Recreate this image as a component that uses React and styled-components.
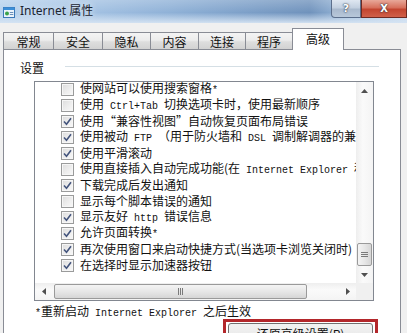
import React from 'react';
import styled, { createGlobalStyle } from 'styled-components';

const GlobalStyle = createGlobalStyle`
  html, body { margin: 0; padding: 0; background: #f0f0f0; }
  body { font-family: "Noto Sans CJK SC", "Noto Sans", sans-serif; }
`;

const Window = styled.div`
  width: 407px;
  height: 333px;
  overflow: hidden;
  display: flex;
  flex-direction: column;
  background: #f0f0f0;
`;

const TitleBar = styled.div`
  height: 23px;
  flex: none;
  display: flex;
  align-items: flex-start;
  background:
    linear-gradient(180deg, rgba(255,255,255,0.22) 0%, rgba(255,255,255,0) 55%, rgba(214,228,243,0.95) 100%),
    linear-gradient(90deg, #b6d2ed 0%, #a7c5e5 18%, #8fb1d7 42%, #7b9ec7 62%, #6f92bc 76%, #9fbddd 86%, #c6d9ed 100%);
`;

const AppIcon = styled.svg`
  flex: none;
  margin: 6px 5px 0 3px;
`;

const TitleText = styled.div`
  font-family: "Noto Sans", "Noto Sans CJK SC", sans-serif;
  font-size: 12px;
  line-height: 21px;
  color: #1b2430;
  text-shadow: 0 0 6px rgba(255,255,255,0.9);
`;

const Caption = styled.div`
  margin-left: auto;
  display: flex;
  height: 18px;
`;

const CapButton = styled.div`
  height: 17px;
  width: ${p => p.$w}px;
  display: flex;
  align-items: center;
  justify-content: center;
  color: #fff;
  font-family: "DejaVu Sans", sans-serif;
  font-weight: bold;
  font-size: ${p => p.$size}px;
  text-shadow: 0 0 2px #2a3340, 0 0 1px #2a3340;
  border: 1px solid ${p => p.$border};
  border-top: none;
  background: ${p => p.$bg};
  border-radius: ${p => p.$radius};
`;

const Body = styled.div`
  flex: 1;
  display: flex;
  flex-direction: column;
  padding: 5px 6px 0 3px;
`;

const Tabs = styled.div`
  height: 21px;
  display: flex;
  align-items: flex-end;
`;

const Tab = styled.div`
  box-sizing: border-box;
  width: ${p => p.$w}px;
  height: ${p => (p.$active ? 22 : 17)}px;
  margin-right: -1px;
  margin-bottom: ${p => (p.$active ? -1 : 0)}px;
  padding-bottom: ${p => (p.$active ? 3 : 0)}px;
  position: relative;
  z-index: ${p => (p.$active ? 2 : 1)};
  border: 1px solid #898c95;
  border-bottom: none;
  display: flex;
  align-items: center;
  justify-content: center;
  font-size: 12px;
  color: #111;
  background: ${p => (p.$active ? '#fff' : 'linear-gradient(180deg, #f4f4f4 0%, #ececec 45%, #dedede 55%, #d2d2d2 100%)')};
`;

const Panel = styled.div`
  height: 320px;
  flex: none;
  border: 1px solid #898c95;
  background: #fff;
  display: flex;
  flex-direction: column;
`;

const GroupHead = styled.div`
  display: flex;
  align-items: center;
  height: 14px;
  margin-top: 10px;
  padding: 0 21px 0 16px;
  font-size: 12px;
  color: #111;
`;

const Rule = styled.div`
  flex: 1;
  margin-left: 21px;
  border-top: 1px solid #d5dfe5;
  border-bottom: 1px solid #fff;
`;

const ListBox = styled.div`
  width: 340px;
  height: 220px;
  box-sizing: border-box;
  margin: 7px 0 0 30px;
  border: 1px solid #828790;
  display: flex;
  flex-direction: column;
`;

const ListArea = styled.div`
  flex: 1;
  display: flex;
  min-height: 0;
`;

const Rows = styled.div`
  flex: 1;
  overflow: hidden;
`;

const Row = styled.div`
  height: 16px;
  padding: 0 0 2px 26px;
  box-sizing: border-box;
  display: flex;
  align-items: center;
  white-space: nowrap;
  font-size: 12px;
  line-height: 14px;
  color: #111;
`;

const Label = styled.span`
  margin-left: 6px;
`;

const Lat = styled.span`
  font-family: "Liberation Mono", monospace;
  font-size: 10px;
  white-space: pre;
`;

const Box = styled.span`
  flex: none;
  width: 11px;
  height: 11px;
  border: 1px solid #9a9b9b;
  background: linear-gradient(135deg, #dcdcdc 0%, #efefef 60%, #f8f8f8 100%);
  box-shadow: inset 0 0 0 1px #f6f6f6;
  display: flex;
  align-items: center;
  justify-content: center;
`;

const VScroll = styled.div`
  width: 17px;
  display: flex;
  flex-direction: column;
  background: linear-gradient(90deg, #eeeeee, #fafafa 40%, #f4f4f4);
`;

const HScroll = styled.div`
  height: 17px;
  display: flex;
  background: linear-gradient(180deg, #eeeeee, #fafafa 40%, #f4f4f4);
`;

const HBar = styled.div`
  flex: 1;
  display: flex;
`;

const Arrow = styled.div`
  flex: none;
  width: 17px;
  height: 17px;
  display: flex;
  align-items: center;
  justify-content: center;
`;

const Track = styled.div`
  flex: 1;
  display: flex;
  flex-direction: ${p => (p.$vertical ? 'column' : 'row')};
  justify-content: ${p => (p.$end ? 'flex-end' : 'flex-start')};
  align-items: stretch;
  padding: ${p => (p.$vertical ? '0 1px' : '1px 0 1px 2px')};
`;

const Thumb = styled.div`
  box-sizing: border-box;
  flex: none;
  width: ${p => (p.$vertical ? 'auto' : `${p.$len}px`)};
  height: ${p => (p.$vertical ? `${p.$len}px` : 'auto')};
  border: 1px solid #9a9a9a;
  border-radius: 2px;
  display: flex;
  align-items: center;
  justify-content: center;
  background: ${p => (p.$vertical
    ? 'linear-gradient(90deg, #f4f4f4 0%, #e7e7e7 50%, #d6d6d6 100%)'
    : 'linear-gradient(180deg, #f4f4f4 0%, #e7e7e7 50%, #d6d6d6 100%)')};
`;

const Corner = styled.div`
  width: 17px;
  background: #f0f0f0;
`;

const Note = styled.div`
  height: 14px;
  margin-top: 3px;
  padding-left: 31px;
  font-size: 12px;
  line-height: 14px;
  color: #111;
  white-space: nowrap;
`;

const ButtonRow = styled.div`
  display: flex;
  justify-content: flex-end;
  align-items: flex-end;
  margin-top: 1px;
  padding-right: 22px;
`;

const Marker = styled.svg`
  flex: none;
  margin: 0 12px 0 0;
`;

const Highlight = styled.div`
  width: 155px;
  box-sizing: border-box;
  border: 3px solid #b3272b;
  padding: 1px 2px 0;
`;

const ResetButton = styled.div`
  height: 24px;
  border: 1px solid #707070;
  border-radius: 3px;
  background: linear-gradient(180deg, #f2f2f2 0%, #ebebeb 45%, #dddddd 55%, #cfcfcf 100%);
  text-align: center;
  font-size: 12px;
  line-height: 18px;
  padding-top: 1px;
  color: #111;
`;

const tabs = [
  ['常规', 51],
  ['安全', 50],
  ['隐私', 49],
  ['内容', 49],
  ['连接', 48],
  ['程序', 48],
  ['高级', 52, true],
];

const items = [
  [false, '使网站可以使用搜索窗格*'],
  [false, '使用 Ctrl+Tab 切换选项卡时，使用最新顺序'],
  [true, '使用“兼容性视图”自动恢复页面布局错误'],
  [true, '使用被动 FTP （用于防火墙和 DSL 调制解调器的兼容性）'],
  [true, '使用平滑滚动'],
  [false, '使用直接插入自动完成功能(在 Internet Explorer 和 Windows 资源管理器中)'],
  [true, '下载完成后发出通知'],
  [false, '显示每个脚本错误的通知'],
  [true, '显示友好 http 错误信息'],
  [true, '允许页面转换*'],
  [true, '再次使用窗口来启动快捷方式(当选项卡浏览关闭时)'],
  [true, '在选择时显示加速器按钮'],
];

// latin runs are drawn in the narrow mono face, like the dialog's SimSun latin
function mixed(text) {
  return text.split(/([A-Za-z0-9*+ ]+)/).map((part, i) =>
    /[A-Za-z0-9*+ ]/.test(part) ? <Lat key={i}>{part}</Lat> : part
  );
}

const Tri = ({ dir }) => {
  const pts = {
    up: '0,4 3.5,0 7,4',
    down: '0,0 3.5,4 7,0',
    left: '4,0 0,3.5 4,7',
    right: '0,0 4,3.5 0,7',
  }[dir];
  const vert = dir === 'up' || dir === 'down';
  return (
    <svg width={vert ? 7 : 4} height={vert ? 4 : 7}>
      <polygon points={pts} fill="#505050" />
    </svg>
  );
};

const Check = () => (
  <svg width="9" height="9" viewBox="0 0 9 9">
    <path d="M1 4.5 L3.5 7.2 L8 1.2" fill="none" stroke="#44557d" strokeWidth="1.6" />
  </svg>
);

const Grip = ({ vertical }) => (
  <svg width="7" height="7">
    {[1, 3, 5].map(v =>
      vertical
        ? <line key={v} x1="0" x2="7" y1={v + 0.5} y2={v + 0.5} stroke="#7a7a7a" />
        : <line key={v} y1="0" y2="7" x1={v + 0.5} x2={v + 0.5} stroke="#7a7a7a" />
    )}
  </svg>
);

export default function App() {
  return (
    <>
      <GlobalStyle />
      <Window>
        <TitleBar>
          <AppIcon width="12" height="12" viewBox="0 0 12 12">
            <rect x="0.5" y="1.5" width="11" height="10" fill="#eaf3fb" stroke="#3b78b8" />
            <rect x="0.5" y="1.5" width="11" height="2.5" fill="#3b8fd8" />
            <circle cx="4" cy="7.5" r="2" fill="#3aa24a" />
            <rect x="6.8" y="6" width="3.5" height="1" fill="#6a8fb8" />
            <rect x="6.8" y="8" width="3.5" height="1" fill="#6a8fb8" />
          </AppIcon>
          <TitleText>Internet 属性</TitleText>
          <Caption>
            <CapButton
              $w={28}
              $size={11}
              $border="#5c6f8c"
              $radius="0 0 0 4px"
              $bg="linear-gradient(180deg, #dfe7f1 0%, #c3d0e0 45%, #a9b9cd 55%, #b8c8da 100%)"
            >?</CapButton>
            <CapButton
              $w={44}
              $size={10}
              $border="#6e2a22"
              $radius="0"
              $bg="linear-gradient(180deg, #e8a899 0%, #d7705c 45%, #c34530 55%, #d0604a 100%)"
            >X</CapButton>
          </Caption>
        </TitleBar>
        <Body>
          <Tabs>
            {tabs.map(([name, w, active]) => (
              <Tab key={name} $w={w} $active={active}>{name}</Tab>
            ))}
          </Tabs>
          <Panel>
            <GroupHead>
              <span>设置</span>
              <Rule />
            </GroupHead>
            <ListBox>
              <ListArea>
                <Rows>
                  {items.map(([checked, text], i) => (
                    <Row key={i}>
                      <Box>{checked && <Check />}</Box>
                      <Label>{mixed(text)}</Label>
                    </Row>
                  ))}
                </Rows>
                <VScroll>
                  <Arrow><Tri dir="up" /></Arrow>
                  <Track $vertical $end>
                    <Thumb $vertical $len={23}><Grip vertical /></Thumb>
                  </Track>
                  <Arrow><Tri dir="down" /></Arrow>
                </VScroll>
              </ListArea>
              <HScroll>
                <HBar>
                  <Arrow><Tri dir="left" /></Arrow>
                  <Track>
                    <Thumb $len={253}><Grip /></Thumb>
                  </Track>
                  <Arrow><Tri dir="right" /></Arrow>
                </HBar>
                <Corner />
              </HScroll>
            </ListBox>
            <Note>{mixed('*重新启动 Internet Explorer 之后生效')}</Note>
            <ButtonRow>
              <Marker width="10" height="6" viewBox="0 0 10 6">
                <polygon points="0,1 6,1 6,0 10,3 6,6 6,5 0,5" fill="#c8252a" />
              </Marker>
              <Highlight>
                <ResetButton>还原高级设置(R)</ResetButton>
              </Highlight>
            </ButtonRow>
          </Panel>
        </Body>
      </Window>
    </>
  );
}
